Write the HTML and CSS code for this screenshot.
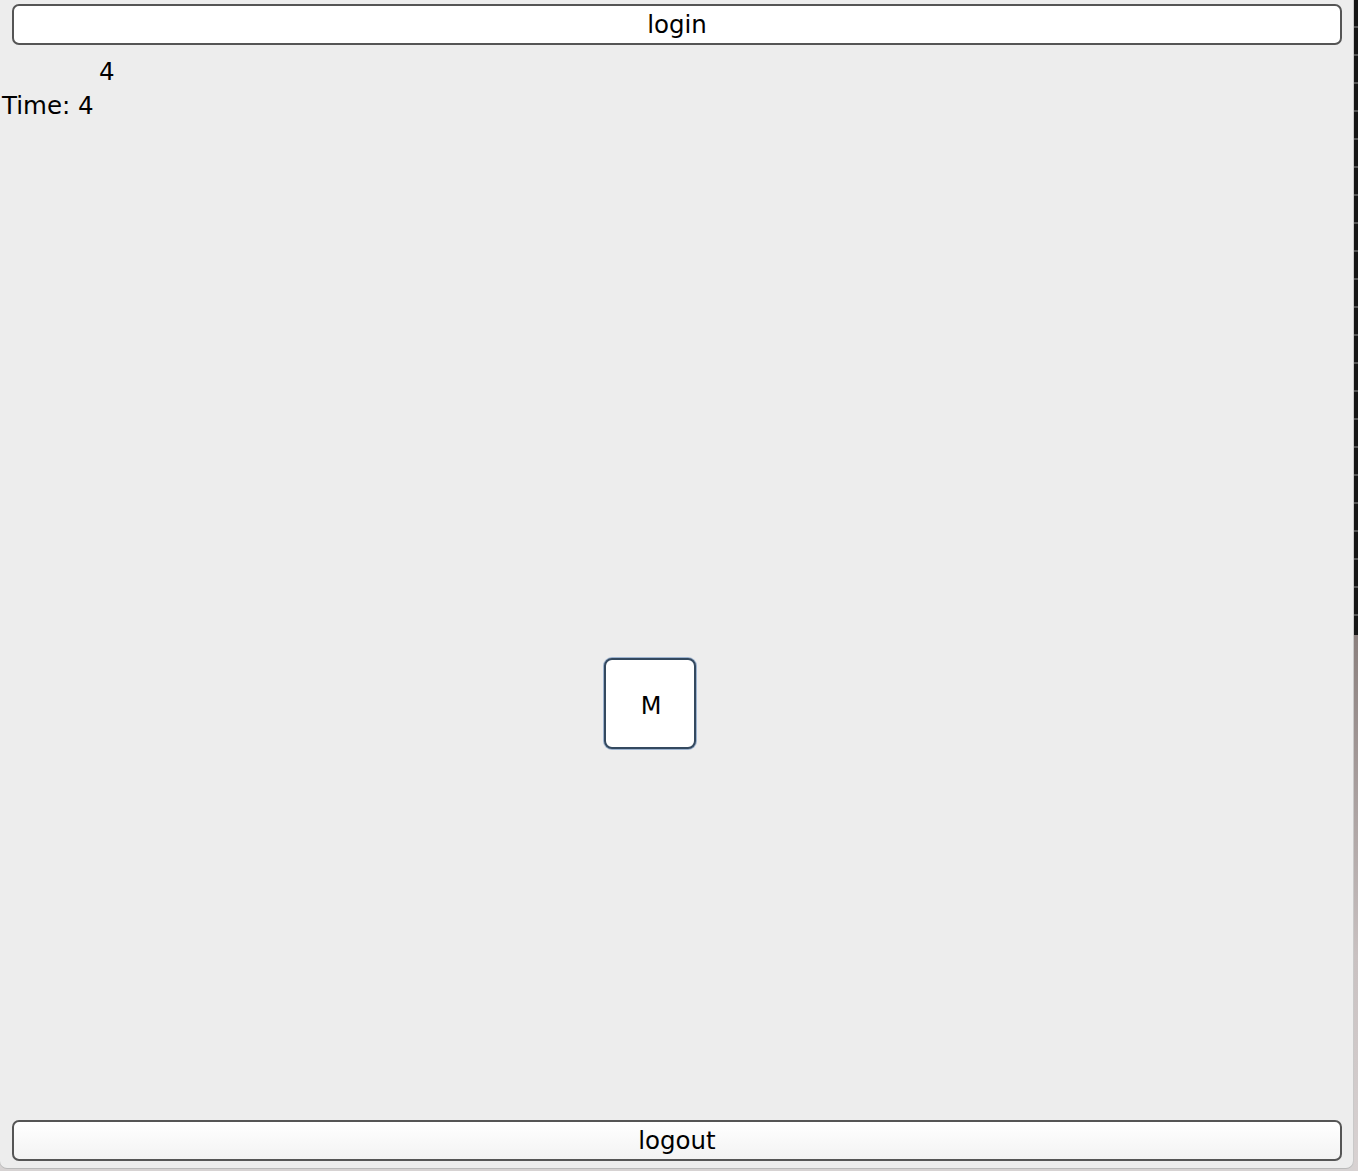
FILE: index.html
```html
<!DOCTYPE html>
<html>
<head>
<meta charset="utf-8">
<link rel="stylesheet" href="styles.css">
</head>
<body>
<div class="screen">
  <div class="window">
    <button class="bar-btn login">login</button>
    <div class="count">4</div>
    <div class="time">Time: 4</div>
    <div class="stage">
      <button class="key">M</button>
    </div>
    <button class="bar-btn logout">logout</button>
  </div>
  <div class="edge">
    <div class="edge-dark"></div>
    <div class="edge-light"></div>
  </div>
</div>
</body>
</html>
```
FILE: styles.css
```css
html, body {
  margin: 0;
  padding: 0;
  background: #d6d2d2;
  font-family: "DejaVu Sans", "Liberation Sans", sans-serif;
  color: #000;
}
.screen {
  display: flex;
  width: 1358px;
  height: 1171px;
  overflow: hidden;
}
.window {
  width: 1353px;
  height: 1168px;
  background: #ededed;
  border-radius: 0 0 7px 7px;
  box-shadow: 0 1px 0 #b9b9b9, 1px 0 0 #c9c9c9, -1px 0 0 #c9c9c9;
  display: flex;
  flex-direction: column;
  box-sizing: border-box;
}
.bar-btn {
  display: block;
  margin-left: 12px;
  width: 1330px;
  height: 41px;
  border: 2px solid #555;
  border-radius: 7px;
  background: #fff;
  font-family: "DejaVu Sans", "Liberation Sans", sans-serif;
  font-size: 24.5px;
  color: #000;
  padding: 0;
  line-height: 35px;
  flex: none;
}
.login {
  margin-top: 4px;
}
.logout {
  margin-top: auto;
  margin-bottom: 7px;
  background: linear-gradient(#ffffff, #f3f3f3);
}
.count {
  margin-top: 11px;
  padding-left: 99px;
  font-size: 24.5px;
  line-height: 32px;
}
.time {
  margin-top: 2px;
  padding-left: 2px;
  font-size: 24.5px;
  line-height: 32px;
}
.stage {
  display: flex;
  flex-direction: column;
}
.key {
  margin-top: 536px;
  margin-left: 604px;
  width: 92px;
  height: 91px;
  border: 2px solid #34495f;
  border-radius: 8px;
  box-shadow: 0 0 0 1px #9db3cf;
  background: #fff;
  font-family: "DejaVu Sans", "Liberation Sans", sans-serif;
  font-size: 24px;
  color: #000;
  padding: 4px 0 0 2px;
  line-height: 28px;
}
.edge {
  margin-left: 1px;
  width: 4px;
  display: flex;
  flex-direction: column;
}
.edge-dark {
  height: 635px;
  background: repeating-linear-gradient(#161616 0, #161616 26px, #555 26px, #555 28px);
}
.edge-light {
  flex: 1;
  background: linear-gradient(#8a7f7d, #c9c1c1 60%, #d8d2d2);
}
```
